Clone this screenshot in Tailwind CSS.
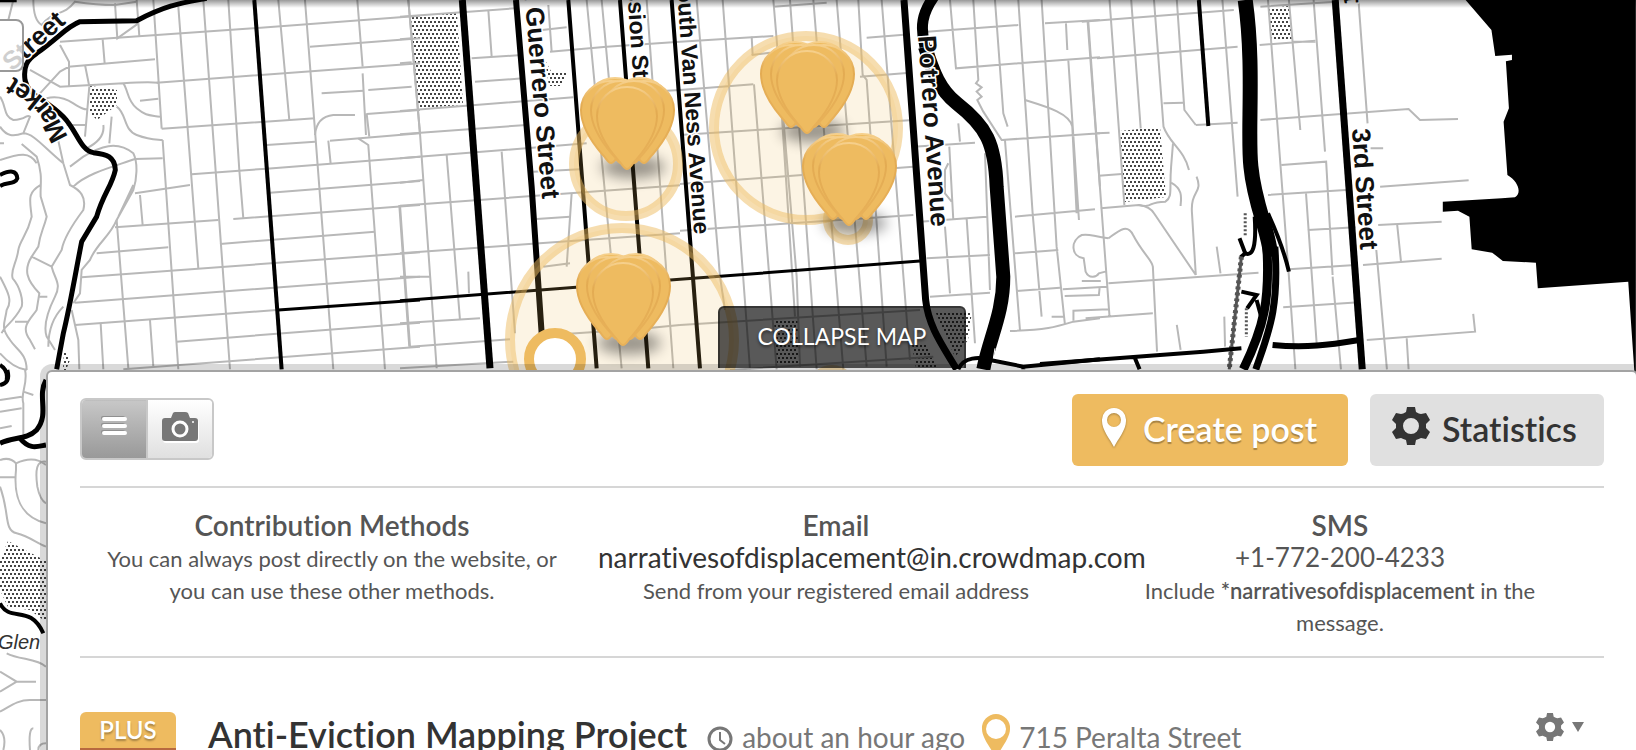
<!DOCTYPE html>
<html lang="en">
<head>
  <meta charset="UTF-8" />
  <meta name="viewport" content="width=device-width, initial-scale=1.0"/>
  <title>Narratives of Displacement | Crowdmap</title>
  <script src="https://cdn.jsdelivr.net/npm/@tailwindcss/browser@4"></script>
</head>
<body class="relative flex h-screen flex-col overflow-hidden bg-white font-['Lato',sans-serif] text-[#555] [font-variant-ligatures:none]">

  <!-- Map -->
  <svg class="absolute top-0 left-0 [&_path]:[vector-effect:non-scaling-stroke]" width="1636" height="750" viewBox="0 0 1636 750" fill="none" role="img" aria-label="Map">
    <defs>
      <pattern id="dots" width="4" height="8" patternUnits="userSpaceOnUse">
        <rect x="0" y="1" width="2" height="2" fill="#444"/>
        <rect x="2" y="5" width="2" height="2" fill="#444"/>
      </pattern>
      <linearGradient id="pin-edge" x1="0" y1="0" x2="0" y2="1">
        <stop offset="0" stop-color="#f6d08c"/>
        <stop offset=".3" stop-color="#e3ab52"/>
        <stop offset="1" stop-color="#e8b159"/>
      </linearGradient>
      <filter id="soft" x="-100%" y="-200%" width="300%" height="500%"><feGaussianBlur stdDeviation="7"/></filter>
      <path id="petal" d="M0 0C-3 0 -4 -4 -9 -9C-21 -23 -30 -38 -30 -53A30 29 0 0 1 30 -53C30 -38 21 -23 9 -9C4 -4 3 0 0 0Z" fill="#eebb60" stroke="url(#pin-edge)" stroke-width="2"/>
      <path id="market" d="M68 137Q52 102 34 90T-20 56"/>
      <g id="cluster">
        <ellipse cx="6" cy="-2" rx="32" ry="11" fill="#000" opacity=".4" filter="url(#soft)"/>
        <use href="#petal" x="-12" y="-9"/>
        <use href="#petal" x="13" y="-9"/>
        <use href="#petal" x="-16" y="-6"/>
        <use href="#petal" x="17" y="-6"/>
        <use href="#petal" x="-6" y="-6"/>
        <use href="#petal" x="7" y="-6"/>
        <use href="#petal"/>
      </g>
    </defs>

    <!-- Parks -->
    <g fill="url(#dots)">
      <path d="M90 86L117 90V105L97 120L90 113Z"/>
      <path d="M411 17L457 13L463 105L418 108Z"/>
      <path d="M545 60L552 73H567L561 86H549Z"/>
      <path d="M774 320H798V365H776Z"/>
      <path d="M935 311H972L968 340L955 357Z"/>
      <path d="M912 345L926 343L938 368H916Z"/>
      <path d="M1120 131L1160 127L1166 197L1125 202Z"/>
      <path d="M1269 8L1289 6L1292 40L1271 41Z"/>
      <path d="M8 541L46 561V622L30 610L8 607L0 590V560Z"/>
      <path d="M64 350L70 360L66 370H63Z"/>
    </g>

    <!-- Minor streets -->
    <g stroke="#b8b8b8" stroke-width="2">
      <g transform="scale(.3333)">
        <path d="M180 125L470 105L760 85L1260 47M930 140L1260 115M205 200L465 178M470 248L1260 190M485 386L945 355M965 280L1090 272M1105 270L1235 260M1100 342L1260 330M800 435L945 425M990 422L1080 415L1260 400M575 523L800 506L1260 470M810 578L1260 543M700 657L1260 615M660 732L1125 695M245 832L1260 757M225 908L1260 830M225 975L830 930M530 1025L1260 968M370 1108L1260 1040M405 580L570 555M345 682L655 660M290 760L505 742M405 477L488 475"/>
        <path d="M460 0L485 386M488 420L535 1108M535 20L595 805M610 0L690 1108M685 0L718 510L730 655M835 0L868 360M915 0L1000 1108M1072 0L1088 200M1088 220L1098 405M1075 415L1105 435L1155 1108M1100 340L1108 410M1225 0L1260 400M1198 615L1228 1040M345 10L352 115L415 70M410 0L418 108M308 118L314 190M350 660L385 1105M420 585L428 675M302 970L310 1108M450 960L460 1100M985 422L992 490"/>
        <path d="M945 405Q950 350 1000 345H1065M40 0L25 60M100 0Q100 60 125 75C160 30 190 50 225 5Q290 15 345 15L410 5M180 135L207 185V258M90 210L180 260L370 250Q440 245 475 248M120 280L180 215L207 200M370 250C385 270 380 300 410 325S450 345 480 350M350 320C380 340 370 390 410 405S460 418 488 420M420 302L475 296M140 295Q180 285 220 310T260 325M255 195L268 260L255 410M200 375H255M210 500L250 470C300 440 350 420 400 460C415 490 410 540 400 570L350 660C330 710 290 730 270 780L245 810L240 880L220 910M220 560C260 520 340 500 405 477M400 555L355 650M170 400L190 490L210 555C240 570 260 590 250 630C220 670 190 720 185 750L155 800C165 840 185 850 165 890C140 940 130 980 140 1010L165 1050M0 290C20 320 10 350 40 360C80 360 80 340 90 350L70 400C40 410 20 410 0 380M70 400C100 400 130 440 190 490M65 432L110 470C130 530 120 550 122 590L140 650C130 690 120 700 115 740L95 770L155 800M95 770C70 810 80 840 118 880L110 930C90 960 60 980 90 1020L105 1048M118 890H142M45 965H85M0 480C60 460 90 455 110 490M122 555C80 580 90 600 95 650C80 710 60 720 55 750C50 790 30 810 38 835C60 860 70 900 65 920C40 970 10 980 5 1000M0 830C20 870 40 900 20 930C15 970 0 980 30 1020C50 1050 80 1060 80 1110M0 1060Q40 1105 80 1110M310 375C315 410 290 430 260 445M335 350L328 430M190 920C160 950 145 990 145 1040M215 930L235 1020L238 1108M0 430H12"/>
      </g>
      <g transform="translate(400 0) scale(.3333)">
        <path d="M0 50L345 25M215 175L365 165M225 245L370 235M0 118L35 115M0 190L35 187M0 333L520 292M0 403L380 375M0 475L560 430M0 548L70 540M0 617L840 556M400 515L540 508M0 760L840 700M410 657L510 650M430 800L510 790M0 830H90M0 970L240 955M30 1040L330 1018M0 1105L340 1085M620 140L840 125M450 155L620 140M800 272L840 270M450 1005L640 992M740 985L840 975M380 95L500 82"/>
        <path d="M25 0L60 400L110 1105M265 30L275 170M140 465L180 960M305 455L345 1000M0 615L30 1040M205 815L207 880M445 15L455 155M515 580L500 800M560 0L665 1105M605 0L640 380M740 0L820 1105"/>
      </g>
      <g transform="translate(680 0) scale(.3333)">
        <path d="M0 125L280 108M560 113L690 103M215 165L270 158M280 20L440 8M0 270L220 253M540 230L690 218M0 405L700 360M0 552L700 500M0 692L700 645M0 975L720 930M150 1110L760 1070"/>
        <path d="M50 0L120 830L135 930M128 0L210 1108M215 110L218 165M222 253L290 1108M280 0L350 830L360 1100M300 260L345 950M330 0L410 1108M400 0L490 1108M470 0L560 1100M535 0L548 225L560 240L620 1100M605 0L690 1080"/>
        <path d="M810 0L828 205L1015 190L1260 172M740 95L1015 75M880 0L895 240L888 250L905 262L890 275L905 290L892 300L910 335L965 420L1260 400M945 0L970 340L983 380M1015 0L1058 640L1085 950M1085 0L1130 740L1155 975M1095 70L1260 60M1158 70L1162 150M1165 180L1197 660M1225 65L1260 560M1035 300C1100 320 1170 340 1177 380L1190 640M700 440L885 428M835 370L840 425M975 420L1020 990M1005 650L1245 628M740 775L930 765M1005 760L1135 750M750 890L930 878M1010 873L1140 863M720 665L920 650M860 655L885 1030M808 440L820 660M805 490L795 510V580L815 605M795 680L810 880M915 460L930 870M990 993C1100 990 1130 980 1180 965L1260 955M1115 950H1150"/>
      </g>
      <g transform="translate(1040 0) scale(.38 .3333)">
        <path d="M110 65L510 30M150 175L520 140M150 400L183 398M155 527L215 522M325 310L378 308M410 375L520 368M160 625L260 615C300 625 280 605 330 605C350 590 340 570 345 500L350 430M180 850L575 818M580 20L780 5M578 135L725 122M665 125H725M580 360L970 327L1000 360L1100 357M600 585L805 570M895 560L1128 541M635 495L753 485L770 825M705 690L830 682M890 675L1057 665M655 808L830 795M850 795L1057 776M640 922L840 907M860 1020L1145 995L1140 942M870 445H903"/>
        <path d="M183 0L222 615M240 0L265 385M300 0L325 380C340 430 380 450 392 510M360 0L380 330L410 375M125 60L183 950M480 0L520 590M600 0L655 830L672 1108M655 0L685 390M720 0L750 455M838 0L862 370M885 750L913 1108M700 580L728 1030M770 830L792 1108M940 675L950 785M965 1015L970 1108M465 740L475 820M260 615Q290 620 300 640L410 825M412 530C430 580 395 570 400 640L410 825M180 715C210 690 230 670 245 705C270 760 295 780 297 800L308 1055M360 975L370 1050M345 548C380 570 370 600 370 618M485 950L487 1040M120 955L297 940M180 715C140 710 130 700 110 705C80 720 80 770 115 775L120 815C130 840 150 830 155 820L172 815M110 843H160M60 868L175 860M65 888L155 885L157 862M88 962V932L180 928"/>
      </g>
      <g transform="translate(0 370) scale(.3333)">
        <path d="M75 0C85 40 60 70 70 100V200M0 90L65 80M0 125L65 115M70 65L100 75M0 175L35 168M0 270Q30 260 48 280C90 260 120 270 138 285M48 280V300C40 380 60 440 138 460M0 322H45M138 275C110 270 105 300 112 350Q120 390 138 400M0 350C30 430 10 480 50 490S110 520 138 530M20 850C60 870 110 865 138 890M0 905L50 935H108M50 935L0 965M0 1025C30 1010 50 990 90 990H138M0 1080Q20 1100 10 1140M100 1075Q85 1075 90 1140M138 1120Q115 1120 115 1140"/>
      </g>
    </g>

    <!-- Main roads -->
    <g stroke="#000">
      <g transform="scale(.3333)" stroke-width="5">
        <path d="M620 -5C540 10 500 15 410 62L240 65C200 80 180 110 110 160C80 180 70 200 75 240C85 290 130 290 190 350C230 390 240 450 280 458C320 462 345 470 346 510C335 560 310 580 290 650L245 725C230 800 210 920 190 1000L170 1108"/>
        <path d="M0 525C30 510 50 510 52 535C45 555 20 545 0 558M0 1095Q25 1110 20 1140" stroke-width="4"/>
        <path d="M763 0L845 1108" stroke-width="4"/>
        <path d="M835 930L1260 900M0 2H50" stroke-width="3"/>
      </g>
      <g transform="translate(400 0) scale(.3333)" stroke-width="4">
        <path d="M187 0L270 1105" stroke-width="7"/>
        <path d="M348 0L395 560L425 1000" stroke-width="6"/>
        <path d="M505 0L590 1105M660 0L745 1105M815 0L900 1105"/>
        <path d="M0 902L840 838L1560 783" stroke-width="3"/>
      </g>
      <g transform="translate(680 0) scale(.3333)">
        <path d="M672 0L737 900C745 980 790 1040 830 1108" stroke-width="7"/>
        <path d="M765 -15C725 40 720 80 735 140" stroke-width="11"/>
        <path d="M735 140C760 220 780 270 830 310C920 380 945 430 950 560L970 830C970 940 930 1010 910 1108" stroke-width="14"/>
        <path d="M900 1040L885 1108M945 1045L935 1108" stroke="#fff" stroke-width="1"/>
        <path d="M835 1108C850 1070 900 1070 930 1080L1030 1100L1260 1078M1030 1095V1108" stroke-width="4"/>
      </g>
      <g transform="translate(1040 0) scale(.38 .3333)" stroke-width="4">
        <path d="M418 0L443 378"/>
        <path d="M540 0C565 200 545 400 555 500C565 620 605 700 607 770" stroke-width="15"/>
        <path d="M597 740C605 900 590 980 535 1108" stroke-width="9"/>
        <path d="M618 740C630 930 600 1000 568 1108" stroke-width="7"/>
        <path d="M600 640Q640 740 655 815M565 650C570 740 560 770 540 760L525 715M528 772L545 755M530 875L570 885L545 925M570 900L582 950"/>
        <path d="M530 770L498 1108" stroke="#555" stroke-width="3"/>
        <path d="M530 770L498 1108" stroke="#555" stroke-width="5" stroke-dasharray="3 3"/>
        <path d="M540 640V710M543 925V1010" stroke="#555" stroke-width="3" stroke-dasharray="2 2"/>
        <path d="M777 0L848 1108" stroke-width="7"/>
        <path d="M0 1092L430 1055L530 1045M250 1075L262 1108"/>
        <path d="M612 1035C700 1045 760 1035 840 1020" stroke-width="6"/>
        <path d="M1120 0L1188 90L1198 168L1242 164V180L1226 184L1234 325L1220 365L1230 525C1260 545 1268 580 1250 592L1215 595L1060 605V635L1100 632L1130 650L1136 748L1190 758L1218 783L1305 788L1310 865L1548 845L1568 1180V0Z" fill="#000" stroke="none"/>
      </g>
      <g transform="translate(0 370) scale(.3333)" stroke-width="5">
        <path d="M138 30C110 80 150 130 110 180C80 210 40 200 0 220M60 205C90 240 110 230 138 225"/>
        <path d="M22 0C30 30 20 40 0 45M0 700C30 760 90 700 130 790" stroke-width="4"/>
      </g>
    </g>

    <!-- Street names -->
    <g class="font-['Liberation_Sans',sans-serif] font-bold" font-size="26" fill="#111" stroke="#fff" stroke-width="3" paint-order="stroke" stroke-linejoin="round">
      <text transform="translate(12 72) rotate(-42)">Street</text>
      <text><textPath href="#market">Market</textPath></text>
      <text transform="translate(524 -8) rotate(85)">t Guerrero Street</text>
      <text transform="translate(627 -11) rotate(86)" font-size="23">ssion Street</text>
      <text transform="translate(677 -11) rotate(86)" font-size="23">outh Van Ness Avenue</text>
      <text transform="translate(918 36) rotate(86)">Potrero Avenue</text>
      <text transform="translate(1352 129) rotate(86)">3rd Street</text>
      <text transform="translate(1344 -5) rotate(86)">t</text>
      <text x="-2" y="649" font-size="20" font-style="italic" font-weight="400" fill="#333">Glen</text>
    </g>

    <!-- Radius markers -->
    <g fill="#eebb60" fill-opacity=".17" stroke="#eebb60" stroke-opacity=".5" stroke-width="10">
      <circle cx="626" cy="164" r="52"/>
      <circle cx="806" cy="128" r="92"/>
      <circle cx="622" cy="340" r="112"/>
      <circle cx="848" cy="220" r="20"/>
      <circle cx="832" cy="390" r="20"/>
    </g>
    <circle cx="555" cy="359" r="26" fill="#fff" stroke="#eebb60" stroke-width="10"/>
    <use href="#cluster" x="627" y="169"/>
    <use href="#cluster" x="623" y="345"/>
    <use href="#cluster" x="807" y="133"/>
    <use href="#cluster" x="849" y="225"/>
  </svg>
  <div class="absolute inset-x-0 top-0 h-2 bg-linear-to-b from-black/40 to-transparent"></div>
  <div class="absolute top-[19px] -left-2 h-[53px] w-8 rounded-lg border-2 border-[#999] bg-white/80"></div>

  <!-- Collapse tab -->
  <div class="relative flex h-[370px] shrink-0 items-end justify-center pl-[48px]">
    <button class="z-10 mb-[2px] h-[62px] w-[248px] rounded-t-md border-2 border-b-0 border-black/40 bg-black/65 pb-1 text-[23px] text-white [text-shadow:0_2px_3px_rgb(0_0_0/0.5)]">COLLAPSE MAP</button>
  </div>

  <!-- Content panel -->
  <main class="relative -mr-[2px] ml-[46px] min-h-0 flex-1 overflow-hidden rounded-t-md border-2 border-b-0 border-[#a3a3a3] bg-white px-8 pt-[22px] shadow-[0_0_0_6px_rgba(0,0,0,0.15)]">
    <div class="box-content flex h-[92px] items-start justify-between border-b-2 border-[#d6d6d6]">
      <div class="mt-1 flex h-[62px] w-[134px] overflow-hidden rounded-md border-2 border-[#c8c8c8]">
        <button aria-label="List view" class="flex flex-1 items-center justify-center border-r-2 border-[#c8c8c8] bg-linear-to-b from-[#c8c8c8] to-[#999] pb-1 inset-shadow-xs">
          <svg width="28" height="24" viewBox="0 0 28 24" stroke-width="4" stroke-linecap="round">
            <path d="M3 3H23M3 10H23M3 17H23" stroke="#909090"/>
            <path d="M4 4H25M4 11H25M4 18H25" stroke="#fff"/>
          </svg>
        </button>
        <button aria-label="Photo view" class="flex flex-1 items-center justify-center bg-linear-to-b from-white to-[#e0e0e0] pb-1">
          <svg class="drop-shadow-[1px_2px_0_#fff]" width="36" height="30" viewBox="0 0 36 30" fill="#777">
            <path d="M3 6H9L11 1Q12 0 13 0H23Q25 0 26 1L28 6H33Q36 6 36 9V26Q36 29 33 29H3Q0 29 0 26V9Q0 6 3 6Z"/>
            <circle cx="18" cy="17" r="7" stroke="#fff" stroke-width="3"/>
            <circle cx="31" cy="10" r="1" fill="#fff"/>
          </svg>
        </button>
      </div>
      <div class="flex gap-[22px] text-[34px] font-semibold">
        <button class="flex h-[72px] w-[276px] items-center gap-4 rounded-md bg-[#eebb60] pb-1 pl-[29px] text-white [text-shadow:0_2px_1px_rgb(0_0_0/0.3)]">
          <svg class="drop-shadow-[0_1px_1px_rgb(0_0_0/0.3)]" width="26" height="40" viewBox="0 0 26 40" fill="#fff">
            <path fill-rule="evenodd" d="M13 0A12 12 0 0 1 25 13C25 22 17 31 13 39C9 31 1 22 1 13A12 12 0 0 1 13 0ZM13 5A7 7 0 1 0 13 19A7 7 0 1 0 13 5Z"/>
          </svg>
          Create post
        </button>
        <button class="flex h-[72px] w-[234px] items-center gap-3 rounded-md bg-[#e0e0e0] pb-1 pl-[22px] text-[#333]">
          <svg class="mb-1" width="38" height="38" viewBox="0 0 38 38">
            <path fill="#333" fill-rule="evenodd" d="M15 0H23L24 5Q27 7 29 7L34 6L38 13L34 17V21L38 25L34 32L29 31Q27 32 24 33L23 38H15L14 33Q11 32 9 31L4 32L0 25L4 21V17L0 13L4 6L9 7Q11 7 14 5ZM19 11A8 8 0 1 0 19 27A8 8 0 1 0 19 11Z"/>
          </svg>
          Statistics
        </button>
      </div>
    </div>

    <section class="grid h-[170px] grid-cols-3 border-b-2 border-[#d6d6d6] pt-[21px] pr-3 text-center text-[22px]/8">
      <div class="px-[14px]">
        <h3 class="text-[28px]/8 font-semibold">Contribution Methods</h3>
        <p class="pt-0.5">You can always post directly on the website, or you can use these other methods.</p>
      </div>
      <div class="px-[14px]">
        <h3 class="text-[28px]/8 font-semibold">Email</h3>
        <a href="mailto:narrativesofdisplacement@in.crowdmap.com" class="block text-[28px]/8 text-[#333]">narrativesofdisplacement@in.crowdmap.com</a>
        <p class="pt-0.5">Send from your registered email address</p>
      </div>
      <div class="px-[14px]">
        <h3 class="text-[28px]/8 font-semibold">SMS</h3>
        <p class="text-[26px]/8">+1-772-200-4233</p>
        <p class="px-8 pt-0.5">Include <b class="font-semibold">*narrativesofdisplacement</b> in the message.</p>
      </div>
    </section>

    <!-- Post -->
    <article class="mt-[54px] flex">
      <a href="#" class="block w-24 overflow-hidden rounded-t-md bg-[#eebb60] text-center text-2xl/9 font-semibold text-white [text-shadow:0_2px_2px_rgb(0_0_0/0.3)]">PLUS
        <span class="block h-24 bg-[#b8693f]"></span>
      </a>
      <div class="-mt-0.5 ml-8 flex flex-1 items-baseline text-[28px]/12 whitespace-nowrap text-[#777]">
        <h2 class="mr-5 text-[36px]/12 font-semibold text-[#333]">Anti-Eviction Mapping Project</h2>
        <svg class="mt-4 mr-2 self-start" width="27" height="27" viewBox="0 0 27 27" fill="none" stroke="#777" stroke-width="3">
          <circle cx="13" cy="13" r="11"/>
          <path d="M13 6V14L18 18" stroke-width="2"/>
        </svg>
        <span>about an hour ago</span>
        <svg class="mt-1 mr-2 ml-4 self-start" width="30" height="44" viewBox="0 0 30 44" fill="#eebb60">
          <path fill-rule="evenodd" d="M15 0A14 14 0 0 1 29 15C29 24 20 34 15 44C10 34 1 24 1 15A14 14 0 0 1 15 0ZM15 5A10 10 0 1 0 15 25A10 10 0 1 0 15 5Z"/>
        </svg>
        <a href="#">715 Peralta Street</a>
      </div>
      <button aria-label="Post options" class="mr-5 flex items-center gap-2 self-start">
        <svg width="28" height="30" viewBox="0 0 38 38">
          <path fill="#777" fill-rule="evenodd" d="M15 0H23L24 5Q27 7 29 7L34 6L38 13L34 17V21L38 25L34 32L29 31Q27 32 24 33L23 38H15L14 33Q11 32 9 31L4 32L0 25L4 21V17L0 13L4 6L9 7Q11 7 14 5ZM19 12A7 7 0 1 0 19 26A7 7 0 1 0 19 12Z"/>
        </svg>
        <svg width="12" height="12" viewBox="0 0 12 12" fill="#777"><path d="M0 1H12L6 11Z"/></svg>
      </button>
    </article>
  </main>

</body>
</html>
